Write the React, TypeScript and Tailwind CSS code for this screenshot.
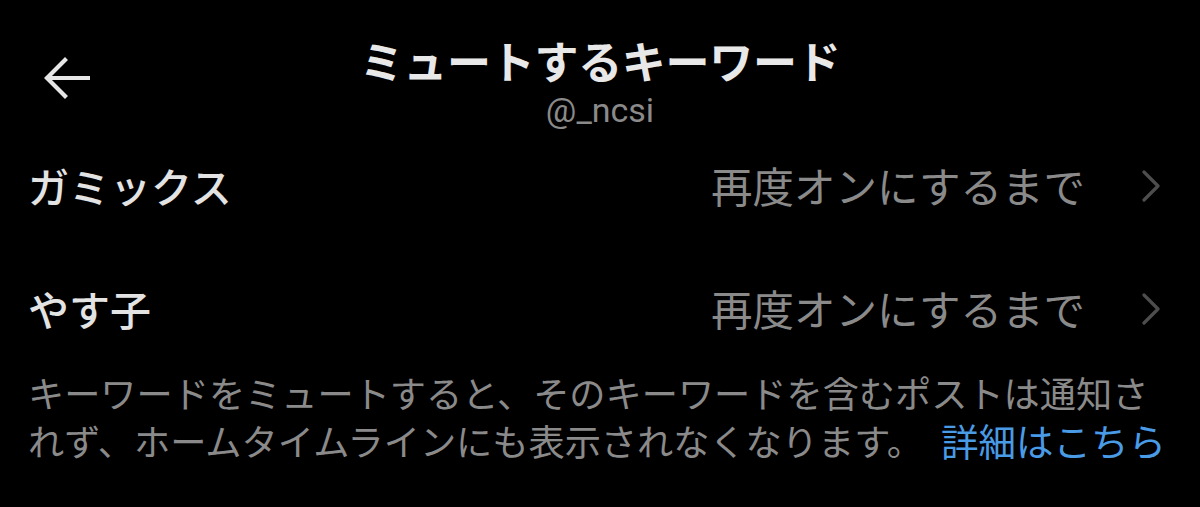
import React from 'react';

const jp = { fontFamily: '"Noto Sans CJK JP", "Noto Sans", sans-serif' };

function BackArrow() {
    return (
        <svg width="46" height="42" viewBox="0 0 46 42" fill="none" stroke="#e6e6e6" strokeWidth="4.2" strokeLinecap="square">
            <path d="M44 21H4" />
            <path d="M21 3L3 21L21 39" />
        </svg>
    );
}

function Chevron() {
    return (
        <svg width="20" height="32" viewBox="0 0 20 32" fill="none" stroke="#4d4d4d" strokeWidth="3.2" strokeLinecap="round" strokeLinejoin="round">
            <path d="M3 2L17 16L3 30" />
        </svg>
    );
}

function Row({ label }: { label: string }) {
    return (
        <div className="flex h-[123px] items-center justify-between pl-[28px] pr-[39px]">
            <span className="text-[41px] font-medium text-[#e3e3e3] leading-none">{label}</span>
            <div className="flex items-center gap-[56px]">
                <span className="text-[41.5px] text-[#8a8a8a] leading-none">再度オンにするまで</span>
                <Chevron />
            </div>
        </div>
    );
}

export default function App() {
    return (
        <div className="min-h-screen bg-black overflow-hidden" style={jp}>
            <div className="grid grid-cols-[1fr_auto_1fr] items-start h-[124px]">
                <div className="pl-[44px] pt-[57px]">
                    <BackArrow />
                </div>
                <div className="flex flex-col items-center pt-[38px]">
                    <h1 className="text-[44px] font-bold text-[#e8e8e8] leading-none tracking-[-0.3px]">
                        ミュートするキーワード
                    </h1>
                    <span className="mt-[11px] text-[34px] text-[#8a8a8a] leading-none" style={{ fontFamily: 'Roboto, "Noto Sans", sans-serif' }}>
                        @_ncsi
                    </span>
                </div>
                <div />
            </div>
            <Row label="ガミックス" />
            <Row label="やす子" />
            <p className="px-[28px] -mt-[2px] text-[36.2px] leading-[48px] text-[#8a8a8a] whitespace-nowrap">
                キーワードをミュートすると、そのキーワードを含むポストは通知さ
                <br />
                れず、ホームタイムラインにも表示されなくなります。<span className="ml-[18px] text-[37.5px] text-[#4a9be6]">詳細はこちら</span>
            </p>
        </div>
    );
}
